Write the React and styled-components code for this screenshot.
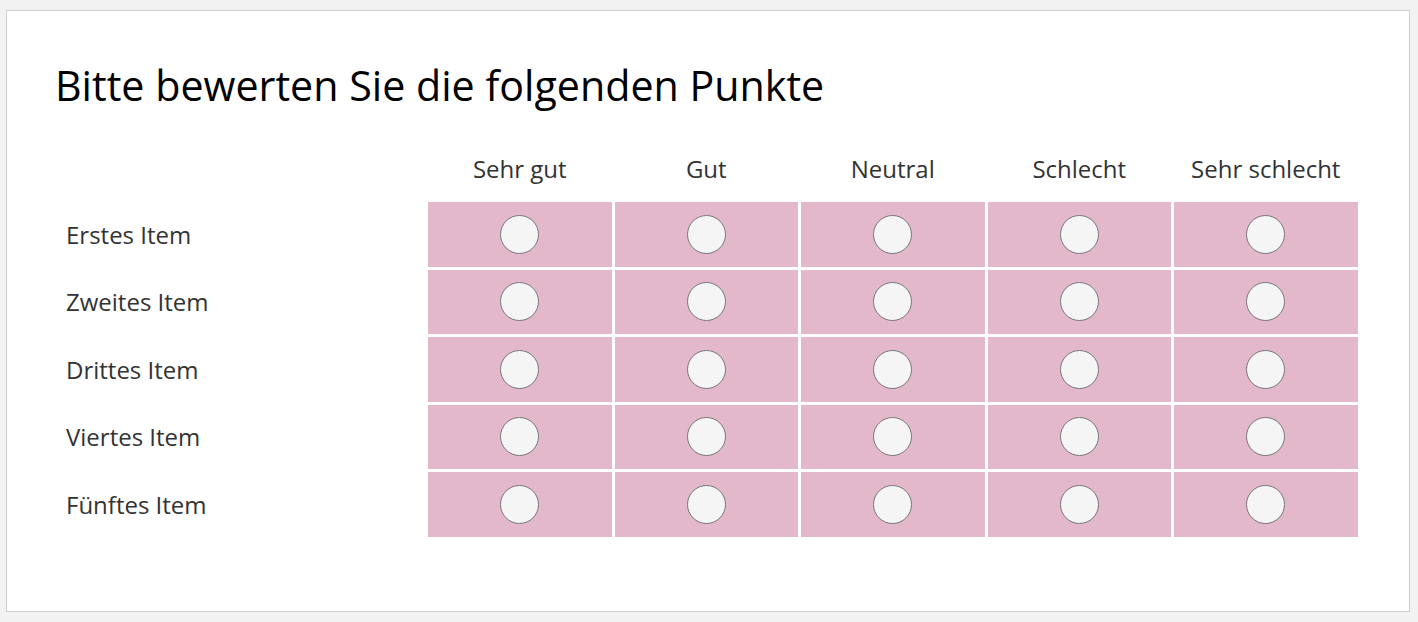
import React from "react";
import styled, { createGlobalStyle } from "styled-components";

const GlobalStyle = createGlobalStyle`
  html, body {
    margin: 0;
    background: #f2f2f2;
    font-family: "Open Sans", "Noto Sans", sans-serif;
  }
`;

const Page = styled.div`
  padding: 10px 8px 11px 6px;
`;

const Card = styled.section`
  box-sizing: border-box;
  height: 602px;
  background: #fff;
  border: 1px solid #cfcfcf;
  padding: 0 51.5px 0 48px;
`;

const Title = styled.h1`
  margin: 0;
  padding-top: 47px;
  font-size: 41.2px;
  line-height: 54px;
  font-weight: 400;
  color: #000;
`;

const Matrix = styled.div`
  display: grid;
  grid-template-columns: 370px repeat(5, 1fr);
  column-gap: 3px;
  row-gap: 3px;
  margin-top: 25px;
`;

const ColHead = styled.div`
  height: 62px;
  display: flex;
  align-items: center;
  justify-content: center;
  font-size: 24px;
  color: #333;
`;

const RowLabel = styled.div`
  height: 64.5px;
  display: flex;
  align-items: center;
  padding-left: 11px;
  font-size: 24px;
  color: #333;
`;

const Cell = styled.label`
  height: 64.5px;
  display: flex;
  align-items: center;
  justify-content: center;
  background: #e3b8cb;
  cursor: pointer;
`;

const Radio = styled.input.attrs({ type: "radio" })`
  appearance: none;
  margin: 0;
  width: 39px;
  height: 39px;
  border-radius: 50%;
  background: #f5f5f5;
  border: 1px solid #777;
  box-sizing: border-box;
  cursor: pointer;

  &:checked {
    background: radial-gradient(circle, #555 0 8px, #f5f5f5 9px);
  }
`;

const scale = ["Sehr gut", "Gut", "Neutral", "Schlecht", "Sehr schlecht"];
const items = ["Erstes Item", "Zweites Item", "Drittes Item", "Viertes Item", "Fünftes Item"];

export default function App() {
  return (
    <Page>
      <GlobalStyle />
      <Card>
        <Title>Bitte bewerten Sie die folgenden Punkte</Title>
        <Matrix>
          <div />
          {scale.map((s) => (
            <ColHead key={s}>{s}</ColHead>
          ))}
          {items.map((item, r) => (
            <React.Fragment key={item}>
              <RowLabel>{item}</RowLabel>
              {scale.map((s) => (
                <Cell key={s}>
                  <Radio name={"item" + r} value={s} />
                </Cell>
              ))}
            </React.Fragment>
          ))}
        </Matrix>
      </Card>
    </Page>
  );
}
